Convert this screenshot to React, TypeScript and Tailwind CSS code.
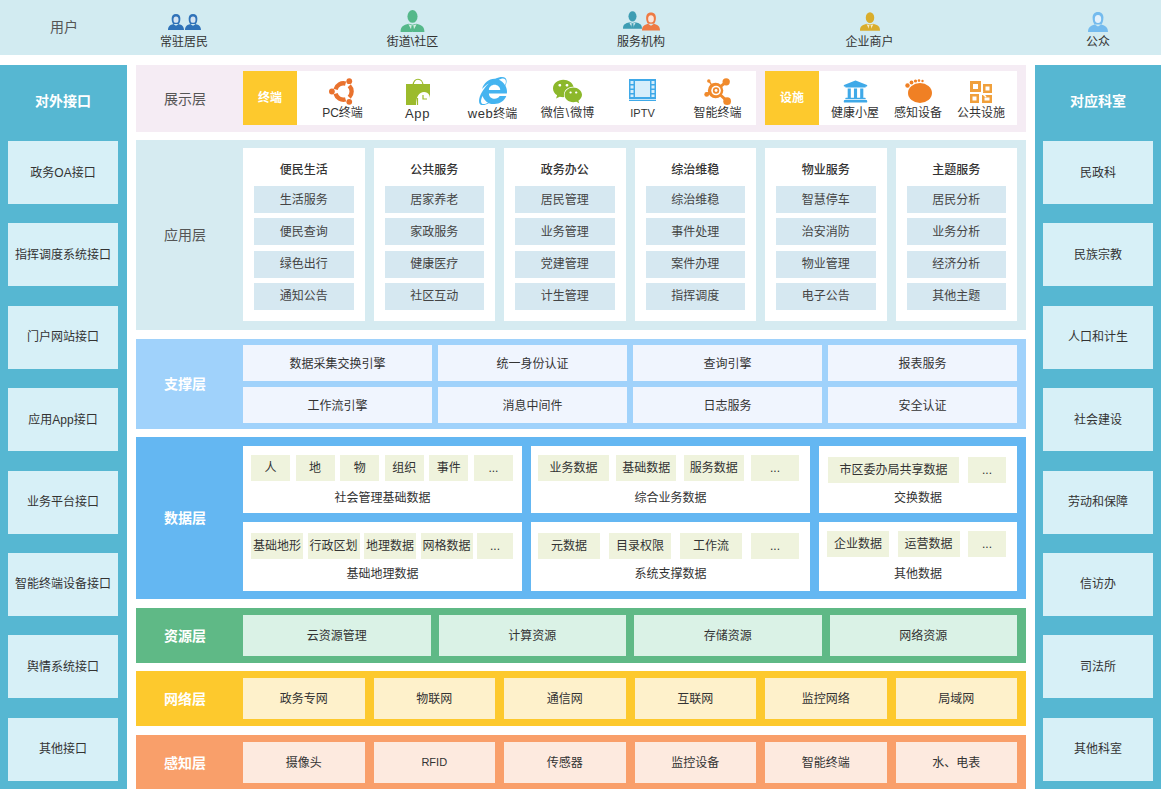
import type { ReactNode } from 'react';
import { FaInternetExplorer, FaUniversity, FaWeixin } from 'react-icons/fa';

const cjk = "font-['Liberation_Sans','Noto_Sans_CJK_SC',sans-serif]";

function Man({ color, className }: { color: string; className?: string }) {
  return (
    <svg viewBox="0 0 26 24" className={className} fill={color}>
      <ellipse cx="13" cy="7" rx="5.500" ry="7" />
      <path d="M0 24c0-6 3-7.500 9-9l4 1 4-1c6 1.500 9 3 9 9z" />
      <path d="M8.500 15.500L13 24l4.500-8.500L13 17z" fill="#fff" fillOpacity="0.75" />
      <path d="M12 17h2l.8 5-1.800 2-1.800-2z" fill={color} />
    </svg>
  );
}

function Woman({ color, className }: { color: string; className?: string }) {
  return (
    <svg viewBox="0 0 24 24" className={className} fill={color}>
      <path d="M12 0c4.500 0 6.500 3 6.500 7 0 3.500-1 6.500-2.500 8H8c-1.500-1.500-2.500-4.500-2.500-8 0-4 2-7 6.500-7z" />
      <ellipse cx="12" cy="8.500" rx="3.800" ry="4.800" fill="#fff" fillOpacity="0.8" />
      <path d="M0 24c0-5.500 3-7.500 8-9l4 2.500 4-2.500c5 1.500 8 3.500 8 9z" />
    </svg>
  );
}

function UserGroup({ label, icon }: { label: string; icon: ReactNode }) {
  return (
    <div className="flex w-[100px] flex-col items-center">
      <div className="flex h-[28px] items-end">{icon}</div>
      <span className="mt-[2px] text-xs leading-[17px] text-[#333]">{label}</span>
    </div>
  );
}

function UbuntuIcon() {
  return (
    <svg viewBox="0 0 28 28" className="h-[27px] w-[27px]" fill="none" stroke="#e9722e" strokeWidth="4.500">
      <path d="M6.800 11.800A8.500 8.500 0 0 1 17.200 5.800" />
      <path d="M21 8A8.500 8.500 0 0 1 21 20" />
      <path d="M17.200 22.200A8.500 8.500 0 0 1 6.800 16.200" />
      <g fill="#e9722e" stroke="none">
        <circle cx="3" cy="14" r="3" />
        <circle cx="21" cy="3.300" r="3" />
        <circle cx="21" cy="24.700" r="3" />
      </g>
    </svg>
  );
}

function AppBag() {
  return (
    <svg viewBox="0 0 26 27" className="h-[27px] w-[26px]">
      <path d="M8 8c0-9 10-9 10 0" fill="none" stroke="#9cbb2c" strokeWidth="1.200" />
      <path d="M1 6h24v21H1z" fill="#9cbb2c" />
      <path d="M11 27c0-8 3-13 8-13s6 4 6 7v6z" fill="#fff" />
      <path d="M12.500 27v-7M18 17v4h4" fill="none" stroke="#9cbb2c" strokeWidth="1.200" />
    </svg>
  );
}

function FilmIcon() {
  return (
    <svg viewBox="0 0 27 22" className="mb-[4px] h-[22px] w-[27px]" fill="#3fa9e8">
      <path d="M0 0h27v20H0z" />
      <path d="M6 2h15v16H6z" fill="#d6eefb" />
      <path d="M1.500 2h3v3h-3zM1.500 6.500h3v3h-3zM1.500 11h3v3h-3zM1.500 15.500h3v2.500h-3zM22.500 2h3v3h-3zM22.500 6.500h3v3h-3zM22.500 11h3v3h-3zM22.500 15.500h3v2.500h-3z" fill="#d6eefb" />
      <path d="M0 20.700h27V22H0z" />
    </svg>
  );
}

function AvastIcon() {
  return (
    <svg viewBox="0 0 28 28" className="h-[27px] w-[27px]" fill="#f08a2c" stroke="#f08a2c">
      <path d="M12 13L23 4M12 13L2 17M12 13L24 24" strokeWidth="3" />
      <path d="M12 13L5 3" strokeWidth="1.500" />
      <g stroke="none">
        <circle cx="12" cy="13" r="8" />
        <circle cx="23" cy="4" r="3.800" />
        <circle cx="2.800" cy="17" r="2.500" />
        <circle cx="24" cy="24" r="4" />
        <circle cx="5" cy="3" r="1.800" />
        <circle cx="12.500" cy="13" r="5" fill="#fff" />
        <circle cx="12.500" cy="13" r="3.300" />
        <circle cx="12.500" cy="13" r="1.500" fill="#fff" />
      </g>
    </svg>
  );
}

function Footprint() {
  return (
    <svg viewBox="0 0 27 24" className="mb-[2px] h-[24px] w-[27px]" fill="#f08024">
      <ellipse cx="15" cy="14" rx="12" ry="10" />
      <circle cx="2.500" cy="6.500" r="2.200" />
      <circle cx="6.500" cy="3.500" r="1.900" />
      <circle cx="10.500" cy="2" r="1.600" />
      <circle cx="14" cy="1.600" r="1.300" />
      <circle cx="17.500" cy="2" r="1.200" />
    </svg>
  );
}

function PublicIcon() {
  return (
    <svg viewBox="0 0 22 22" className="mb-[2px] h-[22px] w-[22px]" fill="#f0a03c">
      <path fillRule="evenodd" d="M0 0h11v11H0zM3 3v5h5V3z" />
      <path fillRule="evenodd" d="M13 3h9v9h-9zM15.500 5.500v4h4v-4z" />
      <path fillRule="evenodd" d="M0 13h9v9H0zM2.500 15.500v4h4v-4z" />
      <path fillRule="evenodd" d="M12 14h10v8H12zM14.500 16.500v3h5v-3z" />
      <path d="M9 13l4-3M13 13l3 3" stroke="#fff" strokeWidth="1.500" />
    </svg>
  );
}

function Terminal({ label, icon, w }: { label: ReactNode; icon: ReactNode; w: string }) {
  return (
    <div className={`flex shrink-0 flex-col items-center pb-[1px] ${w}`}>
      <div className="flex h-[32px] items-end justify-center">{icon}</div>
      <span className="text-xs leading-[17px] whitespace-nowrap text-[#333]">{label}</span>
    </div>
  );
}

function Side({ title, items }: { title: string; items: string[] }) {
  return (
    <div className="flex h-[724px] w-[127px] shrink-0 flex-col bg-[#56b7d2] pr-[9px] pl-2">
      <div className="flex h-[76px] shrink-0 items-center justify-center pb-[4px] text-sm font-bold text-white">{title}</div>
      <div className="flex flex-col gap-[19.4px]">
        {items.map((t) => (
          <div key={t} className="flex h-[63px] items-center justify-center bg-[#d7f0f7] text-xs text-[#333]">
            {t}
          </div>
        ))}
      </div>
    </div>
  );
}

function LayerLabel({ children, strong }: { children: string; strong?: boolean }) {
  return (
    <div className={`flex w-[107px] shrink-0 items-center justify-center pr-[9px] text-sm ${strong ? 'font-bold text-white' : 'text-[#555]'}`}>
      {children}
    </div>
  );
}

const apps = [
  ['便民生活', '生活服务', '便民查询', '绿色出行', '通知公告'],
  ['公共服务', '居家养老', '家政服务', '健康医疗', '社区互动'],
  ['政务办公', '居民管理', '业务管理', '党建管理', '计生管理'],
  ['综治维稳', '综治维稳', '事件处理', '案件办理', '指挥调度'],
  ['物业服务', '智慧停车', '治安消防', '物业管理', '电子公告'],
  ['主题服务', '居民分析', '业务分析', '经济分析', '其他主题'],
];

function DataCard({ title, items, className, rowClass }: {
  title: string; items: [string, string][]; className: string; rowClass: string;
}) {
  return (
    <div className={`flex flex-col justify-between bg-white ${className}`}>
      <div className={`flex justify-between ${rowClass}`}>
        {items.map(([t, w], i) => (
          <div key={i} className={`flex h-[26px] items-center justify-center bg-[#eff3dd] text-xs whitespace-nowrap text-[#333] ${w}`}>
            {t}
          </div>
        ))}
      </div>
      <div className="text-center text-xs leading-[17px] text-[#333]">{title}</div>
    </div>
  );
}

function Strip({ title, items, bg, cell, gap }: { title: string; items: string[]; bg: string; cell: string; gap: string }) {
  return (
    <div className={`flex h-[55px] ${bg} py-[7px] pr-[9px]`}>
      <LayerLabel strong>{title}</LayerLabel>
      <div className={`flex flex-1 ${gap}`}>
        {items.map((t) => (
          <div key={t} className={`flex flex-1 items-center justify-center text-[#333] ${t === 'RFID' ? 'text-[11px]' : 'text-xs'} ${cell}`}>
            {t}
          </div>
        ))}
      </div>
    </div>
  );
}

export default function App() {
  return (
    <div className={`h-[789px] w-[1161px] overflow-hidden bg-white ${cjk}`}>
      <div className="flex h-[55px] items-center bg-[#d2ebf1]">
        <div className="mb-[2px] w-[128px] shrink-0 text-center text-sm text-[#555]">用户</div>
        <div className="flex flex-1 justify-between pr-[13px] pl-[6px]">
          <UserGroup label="常驻居民" icon={<div className="flex gap-[1px]"><Woman color="#2f72b8" className="h-[20px] w-[16px]" /><Woman color="#2f72b8" className="h-[20px] w-[16px]" /></div>} />
          <UserGroup label="街道\社区" icon={<Man color="#55b88a" className="h-[22px] w-[27px]" />} />
          <UserGroup label="服务机构" icon={<div className="flex items-end"><Man color="#3d9db3" className="h-[24px] w-[19px]" /><Woman color="#ee7a43" className="h-[21px] w-[18px]" /></div>} />
          <UserGroup label="企业商户" icon={<Man color="#d9ad2c" className="h-[21px] w-[20px]" />} />
          <UserGroup label="公众" icon={<Woman color="#74bbee" className="h-[20px] w-[20px]" />} />
        </div>
      </div>
      <div className="mt-[10px] flex">
        <Side title="对外接口" items={['政务OA接口', '指挥调度系统接口', '门户网站接口', '应用App接口', '业务平台接口', '智能终端设备接口', '舆情系统接口', '其他接口']} />
        <div className="mx-[9px] flex w-[890px] shrink-0 flex-col">
          <div className="flex h-[67px] bg-[#f5ecf4] py-[6px] pr-[9px]">
            <LayerLabel>展示层</LayerLabel>
            <div className="flex h-[54px] w-[513px] bg-white">
              <div className="flex w-[54px] shrink-0 items-center justify-center bg-[#fdc92d] text-xs font-bold text-white">终端</div>
              <div className="flex flex-1 items-center pl-[8px]">
                <Terminal w="w-[75px]" label="PC终端" icon={<UbuntuIcon />} />
                <Terminal w="w-[75px]" label={<span className="text-[13px] tracking-[0.6px]">App</span>} icon={<AppBag />} />
                <Terminal w="w-[75px]" label={<><span className="text-[13px] tracking-[0.5px]">web</span>终端</>} icon={<FaInternetExplorer className="h-[28px] w-[28px] text-[#45b4f0]" />} />
                <Terminal w="w-[75px]" label={<>微信<span className="mx-[1px]">\</span>微博</>} icon={<FaWeixin className="h-[27px] w-[33px] text-[#8cb82b]" />} />
                <Terminal w="w-[75px]" label={<span className="text-[11px]">IPTV</span>} icon={<FilmIcon />} />
                <Terminal w="w-[75px]" label="智能终端" icon={<AvastIcon />} />
              </div>
            </div>
            <div className="ml-[9px] flex h-[54px] flex-1 bg-white">
              <div className="flex w-[54px] shrink-0 items-center justify-center bg-[#fdc92d] text-xs font-bold text-white">设施</div>
              <div className="flex flex-1 items-center justify-center">
                <Terminal w="w-[63px]" label="健康小屋" icon={<FaUniversity className="mb-[1px] h-[25px] w-[25px] text-[#3fa9e8]" />} />
                <Terminal w="w-[63px]" label="感知设备" icon={<Footprint />} />
                <Terminal w="w-[63px]" label="公共设施" icon={<PublicIcon />} />
              </div>
            </div>
          </div>
          <div className="mt-[8px] flex h-[190px] bg-[#d6ebf1] py-[8px] pr-[9px]">
            <LayerLabel>应用层</LayerLabel>
            <div className="flex flex-1 gap-[9px]">
              {apps.map(([head, ...rest]) => (
                <div key={head} className="flex h-[173px] flex-1 flex-col items-center bg-white px-[11px]">
                  <div className="flex h-[38px] items-center pt-[6px] text-xs font-medium text-[#333]">{head}</div>
                  <div className="flex w-full flex-col gap-[5.33px]">
                    {rest.map((t) => (
                      <div key={t} className="flex h-[27px] items-center justify-center bg-[#d6e8f1] text-xs text-[#444]">{t}</div>
                    ))}
                  </div>
                </div>
              ))}
            </div>
          </div>
          <div className="mt-[9px] flex h-[90px] bg-[#a0d2fb] py-[6px] pr-[9px]">
            <LayerLabel strong>支撑层</LayerLabel>
            <div className="grid flex-1 grid-cols-4 gap-[6px]">
              {['数据采集交换引擎', '统一身份认证', '查询引擎', '报表服务', '工作流引擎', '消息中间件', '日志服务', '安全认证'].map((t) => (
                <div key={t} className="flex items-center justify-center bg-[#f0f5fe] pt-[1px] text-xs text-[#333]">{t}</div>
              ))}
            </div>
          </div>
          <div className="mt-[8px] flex h-[162px] bg-[#64b7f2] py-[9px] pr-[9px]">
            <LayerLabel strong>数据层</LayerLabel>
            <div className="flex flex-1 flex-col gap-[9px]">
              <div className="flex gap-[9px]">
                <DataCard className="h-[67px] w-[279px] pt-[9px] pb-[6px]" rowClass="pr-[9px] pl-[8px]" title="社会管理基础数据"
                  items={[['人', 'w-[39px]'], ['地', 'w-[39px]'], ['物', 'w-[39px]'], ['组织', 'w-[39px]'], ['事件', 'w-[39px]'], ['...', 'w-[39px]']]} />
                <DataCard className="h-[67px] w-[279px] pt-[9px] pb-[6px]" rowClass="pr-[11px] pl-[7px]" title="综合业务数据"
                  items={[['业务数据', 'w-[71px]'], ['基础数据', 'w-[60px]'], ['服务数据', 'w-[60px]'], ['...', 'w-[48px]']]} />
                <DataCard className="h-[67px] w-[198px] pt-[11px] pb-[6px]" rowClass="pr-[11px] pl-[9px]" title="交换数据"
                  items={[['市区委办局共享数据', 'w-[131px]'], ['...', 'w-[38px]']]} />
              </div>
              <div className="flex gap-[9px]">
                <DataCard className="h-[69px] w-[279px] pt-[11px] pb-[8px]" rowClass="pr-[9px] pl-[8px]" title="基础地理数据"
                  items={[['基础地形', 'w-[52px]'], ['行政区划', 'w-[52px]'], ['地理数据', 'w-[52px]'], ['网格数据', 'w-[52px]'], ['...', 'w-[36px]']]} />
                <DataCard className="h-[69px] w-[279px] pt-[11px] pb-[8px]" rowClass="pr-[11px] pl-[7px]" title="系统支撑数据"
                  items={[['元数据', 'w-[62px]'], ['目录权限', 'w-[62px]'], ['工作流', 'w-[62px]'], ['...', 'w-[48px]']]} />
                <DataCard className="h-[69px] w-[198px] pt-[9px] pb-[8px]" rowClass="pr-[11px] pl-[8px]" title="其他数据"
                  items={[['企业数据', 'w-[62px]'], ['运营数据', 'w-[62px]'], ['...', 'w-[38px]']]} />
              </div>
            </div>
          </div>
          <div className="mt-[9px]">
            <Strip title="资源层" bg="bg-[#5fb986]" cell="bg-[#daf2e6]" gap="gap-[8px]" items={['云资源管理', '计算资源', '存储资源', '网络资源']} />
          </div>
          <div className="mt-[8px]">
            <Strip title="网络层" bg="bg-[#fdc92d]" cell="bg-[#fef1cb]" gap="gap-[9px]" items={['政务专网', '物联网', '通信网', '互联网', '监控网络', '局域网']} />
          </div>
          <div className="mt-[9px]">
            <Strip title="感知层" bg="bg-[#f99f6a]" cell="bg-[#fdeadf]" gap="gap-[9px]" items={['摄像头', 'RFID', '传感器', '监控设备', '智能终端', '水、电表']} />
          </div>
        </div>
        <Side title="对应科室" items={['民政科', '民族宗教', '人口和计生', '社会建设', '劳动和保障', '信访办', '司法所', '其他科室']} />
      </div>
    </div>
  );
}
